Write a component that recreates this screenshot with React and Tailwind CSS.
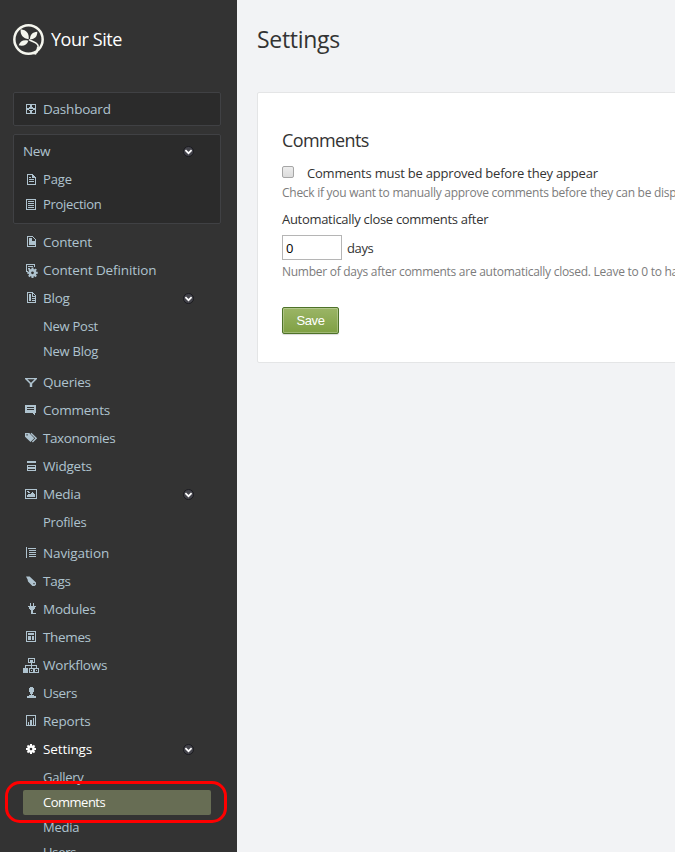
import React from 'react';

const teeth = [0, 45, 90, 135];

const gear = (cx, cy, r) => (
  <g transform={`translate(${cx} ${cy}) scale(${r / 5})`} shapeRendering="auto">
    {teeth.map((a) => (
      <rect key={a} x="-1" y="-5" width="2" height="3" transform={`rotate(${a})`} />
    ))}
    {teeth.map((a) => (
      <rect key={a} x="-1" y="2" width="2" height="3" transform={`rotate(${a})`} />
    ))}
    <circle r="2.5" fill="none" stroke="currentColor" strokeWidth="2.4" />
  </g>
);

const line = { fill: 'none', stroke: 'currentColor', strokeWidth: 1 };

const icons = {
  dashboard: (
    <path fillRule="evenodd" d="M3 3h10v10H3zM4 4v3h2V6h1V4zM9 4v2h1v1h2V4zM4 9v3h3v-2H6V9zM10 9v1H9v2h3V9zM6 7.5v1h4v-1z" />
  ),
  page: <path {...line} d="M4.5 2.5h5l3 3v7h-8zM9.5 2v3.5h3M10.5 3v2M6 5.5h2M6 7.5h5M6 9.5h5" />,
  projection: <path {...line} d="M3.5 2.5h9v10h-9zM5 4.5h6M5 6.5h6M5 8.5h6M5 10.5h6" />,
  content: (
    <>
      <path {...line} d="M4.5 2.5h5l3 3v7h-8z" />
      <path d="M6 4h3v3h3v4H6z" />
    </>
  ),
  definition: (
    <>
      <path {...line} d="M5 9.5H3.5v-7h8V5M5 4.5h5M5 6.5h2" />
      {gear(9.5, 10.8, 5.2)}
    </>
  ),
  blog: (
    <>
      <path {...line} d="M4.5 2.5h5l3 3v7h-8zM10 6.5h2M9 8.5h3M9 10.5h3M9.5 3v3h3" />
      <path d="M6 4h2v7H6z" />
    </>
  ),
  queries: <path d="M2 4h12v1l-4.8 4.8V13H6.8V9.8L2 5zM4.4 5.2 8 8.8l3.6-3.6z" fillRule="evenodd" shapeRendering="auto" />,
  comments: <path d="M2 3h11v8h-1v2h-1l-2-2H2zM4 5v1h7V5zM4 7v1h7V7z" fillRule="evenodd" />,
  taxonomies: (
    <g shapeRendering="auto">
      <path fillRule="evenodd" d="M2 3h4.3l5 5.3-3.8 3.8L2 6.7zM3.4 4.2v1.3h1.3V4.2z" />
      <path {...line} strokeWidth="1.3" d="M8 3.2 13.2 8.2l-3.8 3.8" />
    </g>
  ),
  widgets: <path fillRule="evenodd" d="M4 3h9v2H4zM4 7h9v6H4zM5 8v1h7V8zM5 11v1h7v-1z" />,
  media: (
    <>
      <path {...line} d="M2.5 3.5h11v9h-11z" />
      <path d="M4 11V9l2-1 1 1 2-3h1l2 3v2zM5 5h1v1h1v1H5V6H4V5z" />
    </>
  ),
  navigation: <path {...line} d="M3.5 2v11M5 3h8M6 5.5h7M6 7.5h7M6 9.5h7M6 11.5h7" />,
  tags: <path shapeRendering="auto" fillRule="evenodd" d="M3 3.4h3.6L13 9.6v2.2L11.6 13H9.4L5 8.4 4.6 6.6zM10.4 10v1.2h1.2V10z" />,
  modules: <path d="M7 2h1v3h2V2h1v3h2v1h-1v2h-1v1h-1v3h3v1H8V9H7V8H6V6H5V5h2z" />,
  themes: (
    <>
      <path {...line} d="M3.5 2.5h9v10h-9z" />
      <path d="M5 4h6v2H5zM5 7h3v4H5zM9 7h2v4H9z" />
    </>
  ),
  workflows: (
    <>
      <path {...line} d="M5.5 1.5h6v4h-6zM8.5 6v2M2.5 11V8.5h11V11M8.5 8v3M6.5 11.5h4v4h-4zM11.5 11.5h4v4h-4z" />
      <path d="M7 3h3v2H7zM0 11h5v5H0zM8 13h1v1H8zM13 13h1v1h-1z" />
    </>
  ),
  users: <path d="M7 2h3v1h1v4h-1v2H9v1h2v1h2v2H4v-2h2v-1h2V9H7V7H6V3h1z" />,
  reports: (
    <>
      <path {...line} d="M3.5 2.5h9v10h-9z" />
      <path d="M5 9h1v3H5zM7 7h2v5H7zM10 5h1v7h-1z" />
    </>
  ),
  settings: gear(8, 8, 5),
};

function Icon({ name }) {
  return (
    <svg viewBox="0 0 16 16" className="size-4 shrink-0" fill="currentColor" shapeRendering="crispEdges">
      {icons[name]}
    </svg>
  );
}

function Chevron() {
  return (
    <svg viewBox="0 0 11 11" className="ml-auto mt-px size-[11px] shrink-0">
      <circle cx="5.5" cy="5.5" r="5" fill="#44444b" stroke="#1b1b20" />
      <path d="M2.4 4.2 5.5 7.2l3.1-3" fill="none" stroke="#fff" strokeWidth="1.7" />
    </svg>
  );
}

function Item({ icon, open, active, className = '', children }) {
  return (
    <div className={`flex h-7 items-center pl-[23px] pr-[43px] ${active ? 'text-white' : 'text-[#afc3cf]'} ${className}`}>
      <Icon name={icon} />
      <span className="ml-1 text-[13.5px] tracking-[-0.22px]">{children}</span>
      {open && <Chevron />}
    </div>
  );
}

function SubItem({ children }) {
  return (
    <div className="flex h-[25px] items-center pl-[43px] text-[13px] tracking-[-0.25px] text-[#afc3cf]">
      {children}
    </div>
  );
}

function Logo() {
  return (
    <svg viewBox="0 0 93 93" className="size-[31px]" fill="#f5f6ee">
      <circle cx="46.5" cy="46.5" r="42.5" fill="none" stroke="#f5f6ee" strokeWidth="7.5" />
      <path d="M47 46C31 44 21 34 23 16c18 2 26 13 24 30Z" />
      <path d="M51 46c0-14 7-22 22-23 0 14-7 22-22 23Z" />
      <path d="M46 50c-4 13-15 18-29 14 4-13 15-18 29-14Z" />
      <path d="M48 47c9 6 20 7 25 14 5 6 3 14-2 25" fill="none" stroke="#f5f6ee" strokeWidth="4.5" />
      <path d="m72 68 8 4-11 20-10-2q12-8 13-22Z" />
    </svg>
  );
}

function Sidebar() {
  return (
    <nav className="relative h-full w-[237px] shrink-0 overflow-hidden bg-[#333333]">
      <div className="flex h-[92px] items-start pl-[13px] pt-6">
        <Logo />
        <span className="ml-[7px] mt-[2px] text-[18px] leading-[26px] tracking-[-0.45px] text-white">Your Site</span>
      </div>
      <div className="ml-[13px] flex h-[34px] w-[208px] items-center rounded-[2px] border border-[#404144] bg-[#2b2b2b]">
        <Item icon="dashboard" className="-ml-[14px]">Dashboard</Item>
      </div>
      <div className="ml-[13px] mt-2 h-[90px] w-[208px] rounded-[2px] border border-[#404144] bg-[#2b2b2b] pt-[2px]">
        <div className="flex h-7 items-center pl-[9px] pr-[26px] text-[13.5px] tracking-[-0.35px] text-[#afc3cf]">
          New
          <Chevron />
        </div>
        <Item icon="page" className="-ml-[14px] mt-px [&>span]:text-[13px] [&>span]:tracking-[-0.15px]">Page</Item>
        <Item icon="projection" className="-ml-[14px] -mt-[3px] [&>span]:text-[13px] [&>span]:tracking-[-0.3px]">Projection</Item>
      </div>
      <div className="mt-1">
        <Item icon="content">Content</Item>
        <Item icon="definition" className="[&>span]:tracking-[-0.12px]">Content Definition</Item>
        <Item icon="blog" open>Blog</Item>
        <div className="mb-1 mt-[2px]">
          <SubItem>New Post</SubItem>
          <SubItem>New Blog</SubItem>
        </div>
        <Item icon="queries">Queries</Item>
        <Item icon="comments">Comments</Item>
        <Item icon="taxonomies" className="[&>span]:tracking-[-0.42px]">Taxonomies</Item>
        <Item icon="widgets">Widgets</Item>
        <Item icon="media" open>Media</Item>
        <div className="mb-1 mt-[2px]">
          <SubItem>Profiles</SubItem>
        </div>
        <Item icon="navigation" className="[&>span]:tracking-[-0.12px]">Navigation</Item>
        <Item icon="tags">Tags</Item>
        <Item icon="modules">Modules</Item>
        <Item icon="themes" className="[&>span]:tracking-[-0.35px]">Themes</Item>
        <Item icon="workflows">Workflows</Item>
        <Item icon="users" className="[&>span]:tracking-[-0.35px]">Users</Item>
        <Item icon="reports">Reports</Item>
        <Item icon="settings" open active className="[&>span]:tracking-[-0.12px]">Settings</Item>
        <div className="mt-[2px]">
          <SubItem>Gallery</SubItem>
          <div className="ml-[23px] flex h-[25px] w-[188px] items-center rounded-[2px] bg-[#676d54] pl-5 text-[13px] tracking-[-0.5px] text-white">
            Comments
          </div>
          <SubItem>Media</SubItem>
          <SubItem>Users</SubItem>
        </div>
      </div>
      <div className="absolute left-[5px] top-[781px] h-[42px] w-[222px] rounded-[15px] border-[3px] border-[#ff0000]" />
    </nav>
  );
}

export default function App() {
  return (
    <div className="flex h-[852px] w-[675px] overflow-hidden whitespace-nowrap bg-[#f2f3f5] font-['Open_Sans','Noto_Sans',sans-serif] text-[#333333]">
      <Sidebar />
      <main className="min-w-0 flex-1 pl-5 pt-[23px]">
        <h1 className="h-[69px] text-[23px] leading-8 tracking-[-0.3px]">Settings</h1>
        <section className="h-[271px] w-[500px] rounded-[2px] border border-[#e4e5e6] bg-white pl-6 pt-[35px]">
          <h2 className="text-[18px] leading-6 tracking-[-0.6px]">Comments</h2>
          <label className="mt-[11px] flex h-5 items-center text-[13px]">
            <span className="mb-[3px] size-3 rounded-[2px] border border-[#a6a6a6] bg-linear-to-b from-[#ededed] to-[#dcdcdc]" />
            <span className="ml-[13px] mt-[2px] tracking-[-0.21px]">Comments must be approved before they appear</span>
          </label>
          <p className="h-5 text-[12px] leading-5 tracking-[-0.27px] text-[#7c7c7c]">
            Check if you want to manually approve comments before they can be displayed
          </p>
          <p className="mt-[6px] text-[13px] leading-5 tracking-[-0.3px]">Automatically close comments after</p>
          <div className="mt-[6px] flex h-[25px] items-center text-[13px]">
            <input
              defaultValue="0"
              className="h-[25px] w-[60px] border border-[#b5b5b5] bg-white px-[3px] pt-px text-[13px] text-black outline-none"
            />
            <span className="ml-[5px] mt-[2px] tracking-[-0.4px]">days</span>
          </div>
          <p className="mt-[2px] h-5 text-[12px] leading-5 tracking-[-0.27px] text-[#7c7c7c]">
            Number of days after comments are automatically closed. Leave to 0 to have them always open
          </p>
          <button className="mt-[25px] h-[27px] w-[57px] rounded-[2px] border border-[#4e7229] bg-linear-to-b from-[#9bb566] to-[#7fa043] font-['Liberation_Sans',Arial,sans-serif] text-[13px] tracking-[-0.4px] text-white shadow-[inset_0_0_0_1px_rgba(255,255,255,0.25),0_1px_1px_rgba(0,0,0,0.15)]">
            Save
          </button>
        </section>
      </main>
    </div>
  );
}
